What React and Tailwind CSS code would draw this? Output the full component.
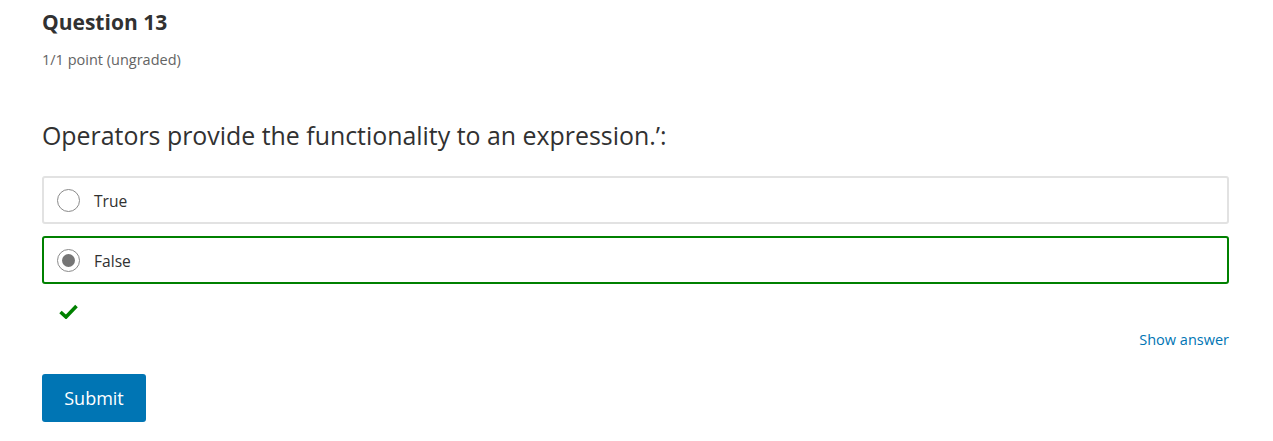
import React from "react";

export default function App() {
  return (
    <div className="w-[1273px] h-[441px] bg-white px-[42px] pt-[6px]" style={{ fontFamily: '"Open Sans", sans-serif' }}>
      <h3 className="text-[21px] font-bold text-[#313131] leading-[32px]">Question 13</h3>
      <div className="mt-[12px] text-[14.5px] text-[#646464] leading-[20px]">1/1 point (ungraded)</div>
      <p className="mt-[49px] text-[24.9px] text-[#313131] leading-[32px]">Operators provide the functionality to an expression.&#8217;:</p>
      <div className="mt-[25px] flex flex-col gap-[12px] w-[1187px]">
        <label className="flex items-center h-[48px] border-2 border-[#e2e2e2] rounded-[3px] pl-[13px]">
          <span className="w-[23px] h-[23px] rounded-full border border-[#8a8a8a] bg-white shrink-0" />
          <span className="ml-[14px] mt-[4px] text-[15.6px] text-[#313131]">True</span>
        </label>
        <label className="flex items-center h-[48px] border-2 border-[#008100] rounded-[3px] pl-[13px]">
          <span className="w-[23px] h-[23px] rounded-full border border-[#8a8a8a] bg-white shrink-0 flex items-center justify-center">
            <span className="w-[13px] h-[13px] rounded-full bg-[#757575]" />
          </span>
          <span className="ml-[14px] mt-[4px] text-[15.6px] text-[#313131]">False</span>
        </label>
      </div>
      <div className="mt-[20px] pl-[17px] h-[16px]">
        <svg width="19" height="15" viewBox="0 0 19 15">
          <path d="M1.5 8 L7 13 L17.5 2" fill="none" stroke="#008100" strokeWidth="3.6" strokeLinecap="butt" strokeLinejoin="miter" />
        </svg>
      </div>
      <div className="w-[1187px] flex justify-end mt-[10px]">
        <button className="text-[14.5px] text-[#0075b4] leading-[20px]">Show answer</button>
      </div>
      <button className="mt-[24px] w-[104px] h-[48px] bg-[#0075b4] text-white text-[18px] rounded-[3px]">Submit</button>
    </div>
  );
}
